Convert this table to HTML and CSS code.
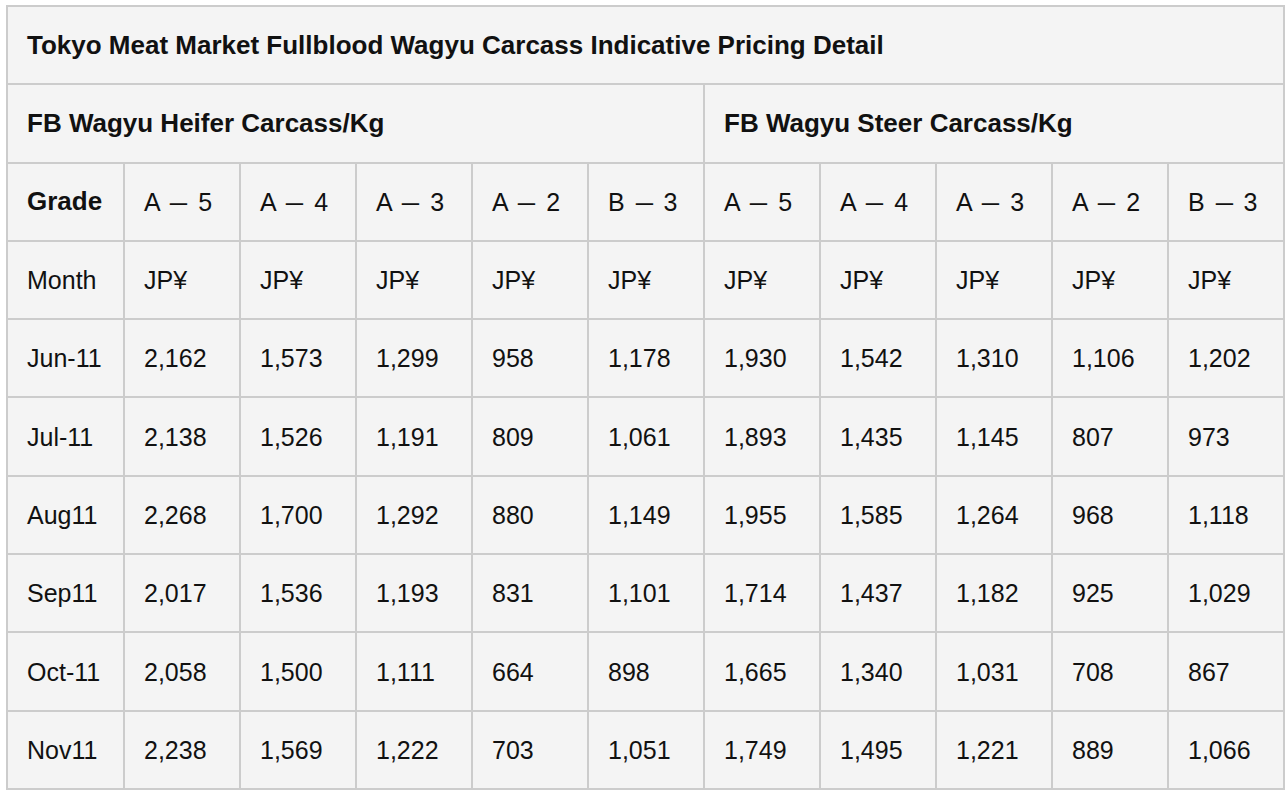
FILE: index.html
```html
<!DOCTYPE html>
<html>
<head>
<meta charset="utf-8">
<link rel="stylesheet" href="styles.css">
</head>
<body>
<table class="pricing">
  <colgroup>
    <col class="c-first">
    <col class="c"><col class="c"><col class="c"><col class="c"><col class="c">
    <col class="c"><col class="c"><col class="c"><col class="c"><col class="c">
  </colgroup>
  <tbody>
    <tr><th colspan="11">Tokyo Meat Market Fullblood Wagyu Carcass Indicative Pricing Detail</th></tr>
    <tr><th colspan="6">FB Wagyu Heifer Carcass/Kg</th><th colspan="5">FB Wagyu Steer Carcass/Kg</th></tr>
    <tr><th>Grade</th><td>A <span class="dash">–</span> 5</td><td>A <span class="dash">–</span> 4</td><td>A <span class="dash">–</span> 3</td><td>A <span class="dash">–</span> 2</td><td>B <span class="dash">–</span> 3</td><td>A <span class="dash">–</span> 5</td><td>A <span class="dash">–</span> 4</td><td>A <span class="dash">–</span> 3</td><td>A <span class="dash">–</span> 2</td><td>B <span class="dash">–</span> 3</td></tr>
    <tr><td>Month</td><td>JP¥</td><td>JP¥</td><td>JP¥</td><td>JP¥</td><td>JP¥</td><td>JP¥</td><td>JP¥</td><td>JP¥</td><td>JP¥</td><td>JP¥</td></tr>
    <tr><td>Jun-11</td><td>2,162</td><td>1,573</td><td>1,299</td><td>958</td><td>1,178</td><td>1,930</td><td>1,542</td><td>1,310</td><td>1,106</td><td>1,202</td></tr>
    <tr><td>Jul-11</td><td>2,138</td><td>1,526</td><td>1,191</td><td>809</td><td>1,061</td><td>1,893</td><td>1,435</td><td>1,145</td><td>807</td><td>973</td></tr>
    <tr><td>Aug11</td><td>2,268</td><td>1,700</td><td>1,292</td><td>880</td><td>1,149</td><td>1,955</td><td>1,585</td><td>1,264</td><td>968</td><td>1,118</td></tr>
    <tr><td>Sep11</td><td>2,017</td><td>1,536</td><td>1,193</td><td>831</td><td>1,101</td><td>1,714</td><td>1,437</td><td>1,182</td><td>925</td><td>1,029</td></tr>
    <tr><td>Oct-11</td><td>2,058</td><td>1,500</td><td>1,111</td><td>664</td><td>898</td><td>1,665</td><td>1,340</td><td>1,031</td><td>708</td><td>867</td></tr>
    <tr><td>Nov11</td><td>2,238</td><td>1,569</td><td>1,222</td><td>703</td><td>1,051</td><td>1,749</td><td>1,495</td><td>1,221</td><td>889</td><td>1,066</td></tr>
  </tbody>
</table>
</body>
</html>
```
FILE: styles.css
```css
html, body {
  margin: 0;
  padding: 0;
  background: #ffffff;
}
body {
  padding: 5px 0 0 6px;
  font-family: "Liberation Sans", Arial, sans-serif;
  color: #111111;
}
.pricing {
  border-collapse: collapse;
  table-layout: fixed;
  width: 1279px;
  background: #f4f4f4;
  font-size: 25px;
}
.c-first { width: 117px; }
.c { width: 116px; }
.pricing tr {
  height: 78.3px;
}
.pricing th,
.pricing td {
  border: 2px solid #cccccc;
  padding: 0 0 0 19px;
  text-align: left;
  vertical-align: middle;
  box-sizing: border-box;
  white-space: nowrap;
  line-height: 1.2;
}
.pricing th {
  font-weight: bold;
  font-size: 26px;
}
.dash {
  display: inline-block;
  width: 25px;
  text-align: center;
  transform: scaleX(1.25);
}
```
